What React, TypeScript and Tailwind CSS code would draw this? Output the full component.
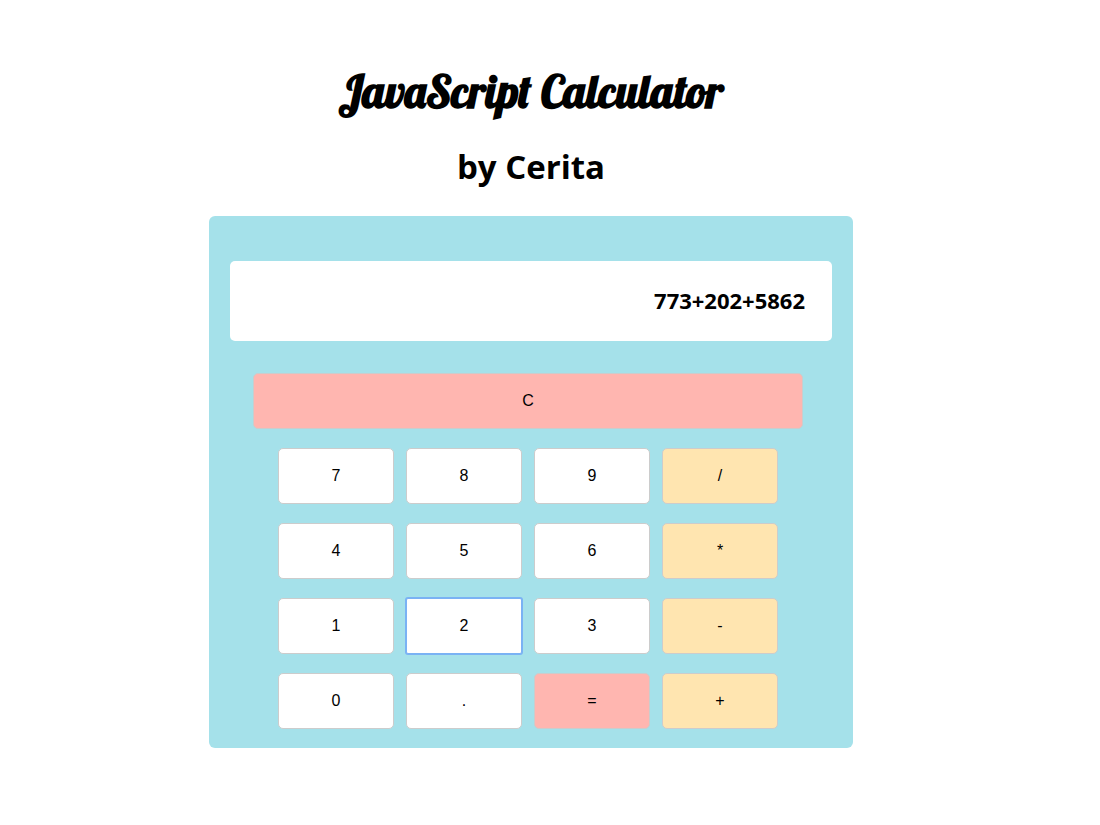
import { useState } from "react";
import clsx from "clsx";

type Tone = "digit" | "operator" | "action";

const KEYS: { label: string; tone: Tone }[] = [
  { label: "7", tone: "digit" },
  { label: "8", tone: "digit" },
  { label: "9", tone: "digit" },
  { label: "/", tone: "operator" },
  { label: "4", tone: "digit" },
  { label: "5", tone: "digit" },
  { label: "6", tone: "digit" },
  { label: "*", tone: "operator" },
  { label: "1", tone: "digit" },
  { label: "2", tone: "digit" },
  { label: "3", tone: "digit" },
  { label: "-", tone: "operator" },
  { label: "0", tone: "digit" },
  { label: ".", tone: "digit" },
  { label: "=", tone: "action" },
  { label: "+", tone: "operator" },
];

const TONES: Record<Tone, string> = {
  digit: "bg-white",
  operator: "bg-[#ffe5b0]",
  action: "bg-[#ffb6b0]",
};

// Evaluates a flat expression, multiplication and division first.
function evaluate(expression: string): string {
  const tokens = expression.match(/\d*\.?\d+|[-+*/]/g) ?? [];
  const terms: number[] = [];
  let operator = "+";
  for (const token of tokens) {
    if (/^[-+*/]$/.test(token)) {
      operator = token;
      continue;
    }
    const value = Number(token);
    if (operator === "*") terms.push((terms.pop() ?? 0) * value);
    else if (operator === "/") terms.push((terms.pop() ?? 0) / value);
    else terms.push(operator === "-" ? -value : value);
  }
  return String(terms.reduce((sum, term) => sum + term, 0));
}

function Key({
  label,
  tone,
  active,
  onPress,
}: {
  label: string;
  tone: Tone;
  active: boolean;
  onPress: (label: string) => void;
}) {
  return (
    <button
      type="button"
      onClick={() => onPress(label)}
      className={clsx(
        "h-14 w-full cursor-pointer border font-['Liberation_Sans',Arial,sans-serif] text-base text-black outline-none",
        TONES[tone],
        active
          ? "rounded-[2px] border-[#7ab2f4] ring-1 ring-[#7ab2f4]"
          : "rounded-[5px] border-[#cccccc]",
      )}
    >
      {label}
    </button>
  );
}

export default function App() {
  const [expression, setExpression] = useState("773+202+5862");
  const [lastKey, setLastKey] = useState("2");

  const press = (label: string) => {
    setLastKey(label);
    if (label === "C") setExpression("");
    else if (label === "=") setExpression(evaluate(expression));
    else setExpression(expression + label);
  };

  return (
    <main className="bg-white pt-[63px] pr-[38px] pb-16 font-['Droid_Sans','Open_Sans','Noto_Sans',sans-serif] text-black">
      <header className="text-center">
        <h1 className="font-['Lobster',cursive] text-[45px] leading-[56px] font-bold">
          JavaScript Calculator
        </h1>
        <h2 className="mt-[25px] text-[33px] leading-[46px] font-bold">by Cerita</h2>
      </header>

      <section
        aria-label="Calculator"
        className="mx-auto mt-[26px] max-w-[644px] rounded-md bg-[#a5e1ea] px-[21px] pt-[45px] pb-[19px]"
      >
        <output className="flex h-20 items-center justify-end overflow-hidden rounded-[5px] bg-white px-[27px] pb-0.5 text-[22px] font-bold">
          {expression}
        </output>

        <div className="mt-8 flex flex-col gap-[19px] pr-[29px] pl-[23px]">
          <Key label="C" tone="action" active={lastKey === "C"} onPress={press} />
          <div className="grid grid-cols-4 gap-x-3 gap-y-[19px] px-[25px]">
            {KEYS.map((key) => (
              <Key
                key={key.label}
                label={key.label}
                tone={key.tone}
                active={lastKey === key.label}
                onPress={press}
              />
            ))}
          </div>
        </div>
      </section>
    </main>
  );
}
